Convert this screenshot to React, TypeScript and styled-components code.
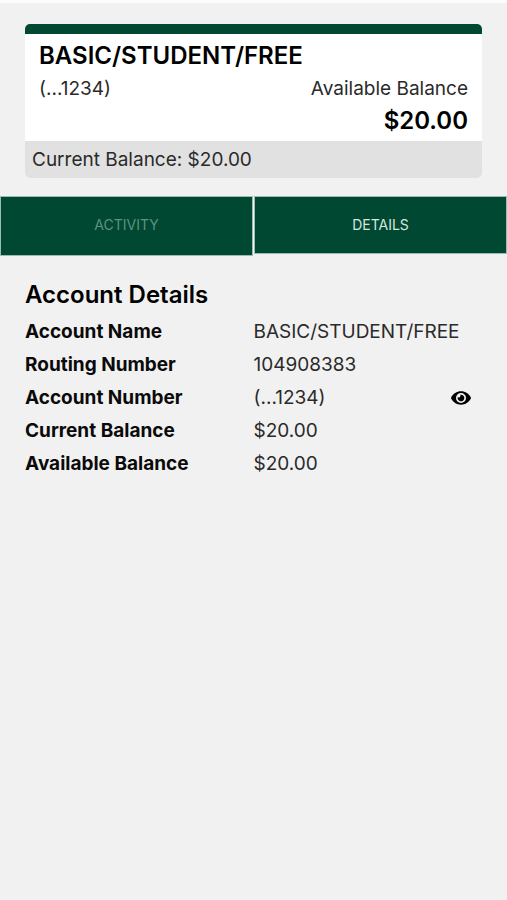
import React, { useState } from 'react';
import styled, { createGlobalStyle } from 'styled-components';
import { FaEye } from 'react-icons/fa';

const GlobalStyle = createGlobalStyle`
  * { box-sizing: border-box; }
  body {
    margin: 0;
    background: #f1f1f1;
    color: #2a2a2a;
    font-family: Inter, "Liberation Sans", sans-serif;
    font-size: 19px;
  }
`;

const Page = styled.main`
  border-top: 3px solid #fcfcfc;
  padding-top: 21px;
`;

const Card = styled.section`
  margin: 0 25px 18px;
  border-radius: 5px;
  border-top: 10px solid #004832;
  background: #fff;
  overflow: hidden;
`;

const CardBody = styled.div`
  padding: 6px 14px 4px;
`;

const CardTitle = styled.h1`
  margin: 0;
  color: #000;
  font-size: 24px;
  font-weight: 600;
  line-height: 32px;
`;

const CardRow = styled.div`
  display: flex;
  justify-content: space-between;
  line-height: 33px;
`;

const Amount = styled.div`
  color: #000;
  font-size: 24px;
  font-weight: 600;
  line-height: 32px;
  text-align: right;
`;

const CardFooter = styled.div`
  padding: 0 7px;
  background: #e1e1e1;
  line-height: 37px;
`;

const Tabs = styled.div`
  display: grid;
  grid-template-columns: 1fr 1fr;
  align-items: start;
  gap: 1px;
`;

const Tab = styled.button<{ $active: boolean }>`
  padding: 0 0 ${({ $active }) => ($active ? 0 : 2)}px;
  border: 1px solid #9dbcb0;
  background: #004832;
  color: ${({ $active }) => ($active ? '#d6e6df' : '#5f9080')};
  font: 400 14px/56px Inter, "Liberation Sans", sans-serif;
  text-transform: uppercase;
  cursor: pointer;
`;

const Details = styled.section`
  padding: 22px 25px;
`;

const Heading = styled.h2`
  margin: 0;
  color: #000;
  font-size: 24px;
  font-weight: 600;
  line-height: 34px;
`;

const List = styled.dl`
  margin: 3px 0 0;
`;

const Item = styled.div`
  display: grid;
  grid-template-columns: 1fr 1fr;
  line-height: 33px;
`;

const Term = styled.dt`
  color: #0a0a0a;
  font-weight: 700;
`;

const Value = styled.dd`
  display: flex;
  align-items: center;
  justify-content: space-between;
  margin: 0;
`;

const Reveal = styled.button`
  display: flex;
  margin-right: 11px;
  padding: 0;
  border: 0;
  background: none;
  color: #000;
  font-size: 20px;
  cursor: pointer;
`;

const details = [
  { term: 'Account Name', value: 'BASIC/STUDENT/FREE' },
  { term: 'Routing Number', value: '104908383' },
  { term: 'Account Number', value: '(...1234)', hidden: true },
  { term: 'Current Balance', value: '$20.00' },
  { term: 'Available Balance', value: '$20.00' },
];

export default function App() {
  const [tab, setTab] = useState('Details');
  return (
    <>
      <GlobalStyle />
      <Page>
        <Card>
          <CardBody>
            <CardTitle>BASIC/STUDENT/FREE</CardTitle>
            <CardRow>
              <span>(...1234)</span>
              <span>Available Balance</span>
            </CardRow>
            <Amount>$20.00</Amount>
          </CardBody>
          <CardFooter>Current Balance: $20.00</CardFooter>
        </Card>
        <Tabs role="tablist">
          {['Activity', 'Details'].map((name) => (
            <Tab
              key={name}
              type="button"
              role="tab"
              aria-selected={tab === name}
              $active={tab === name}
              onClick={() => setTab(name)}
            >
              {name}
            </Tab>
          ))}
        </Tabs>
        <Details>
          <Heading>Account Details</Heading>
          <List>
            {details.map(({ term, value, hidden }) => (
              <Item key={term}>
                <Term>{term}</Term>
                <Value>
                  {value}
                  {hidden && (
                    <Reveal type="button" aria-label="Show account number">
                      <FaEye />
                    </Reveal>
                  )}
                </Value>
              </Item>
            ))}
          </List>
        </Details>
      </Page>
    </>
  );
}
